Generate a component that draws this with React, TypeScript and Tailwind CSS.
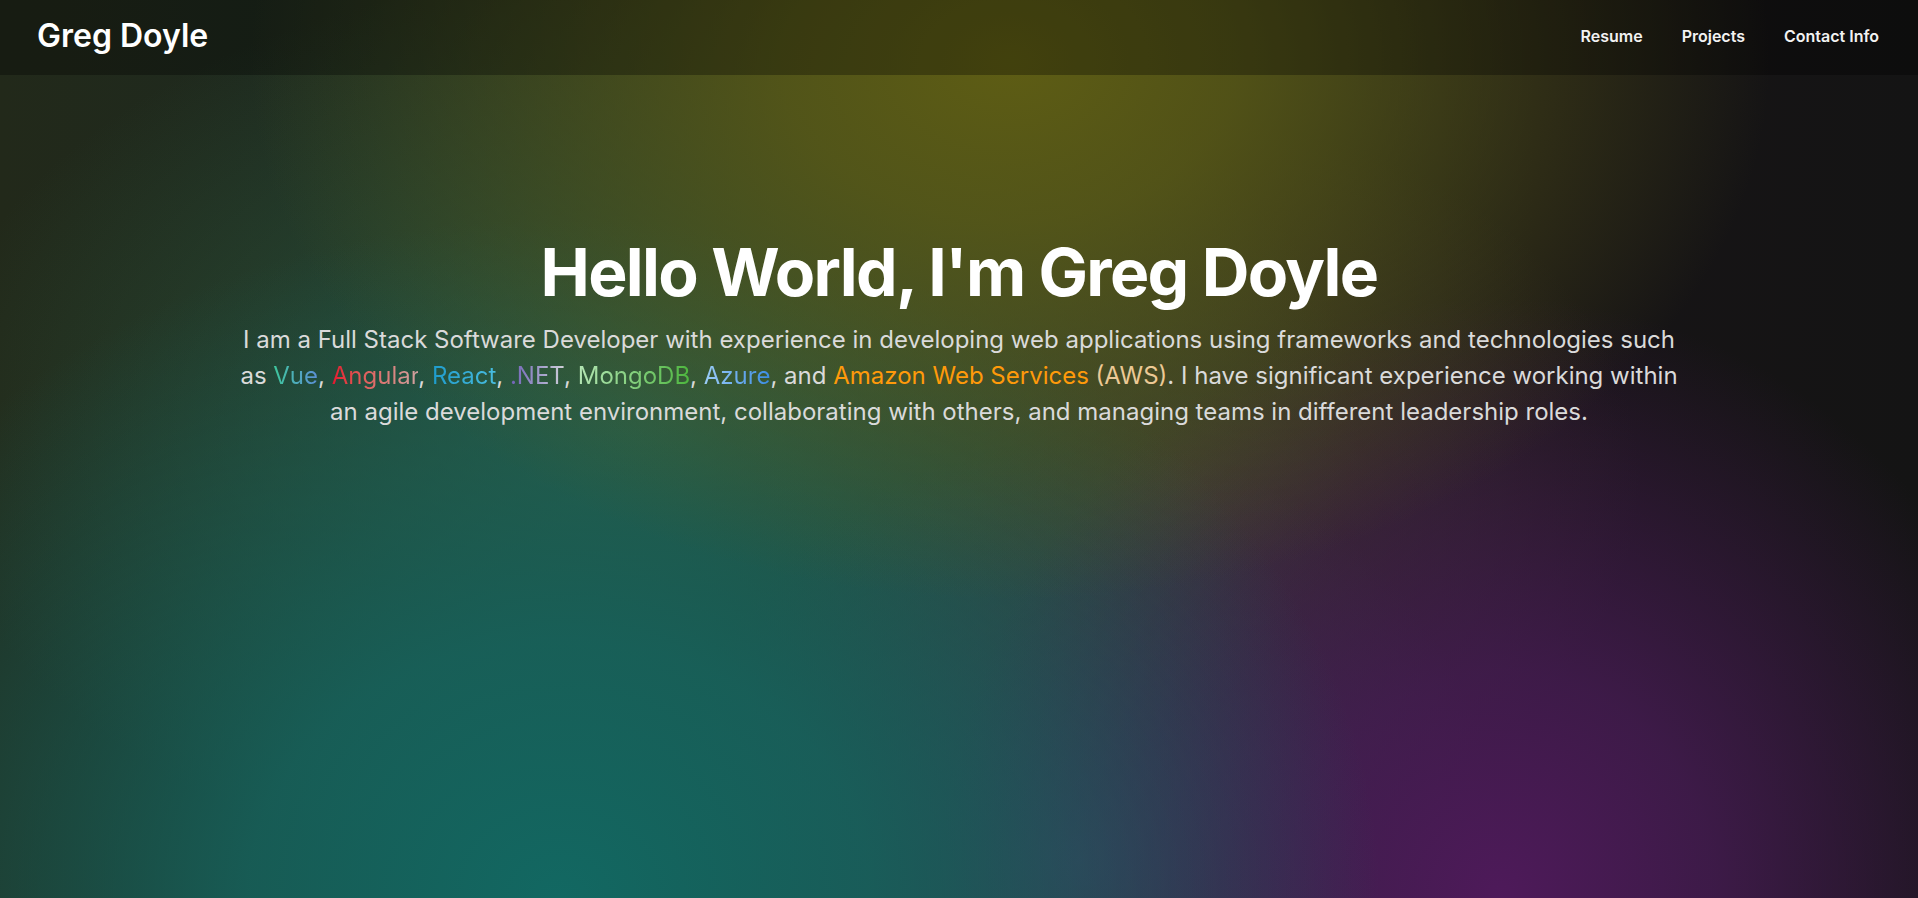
import React from 'react';

const techs = [
  { name: 'Vue', cls: 'from-[#3cc79a] to-[#5b8ed6]' },
  { name: 'Angular', cls: 'from-[#e3102e] to-[#cfa2a0]' },
  { name: 'React', cls: 'from-[#1d9bcb] to-[#48bde0]' },
  { name: '.NET', cls: 'from-[#6f5fb5] to-[#cfcfd8]' },
  { name: 'MongoDB', cls: 'from-[#b4e6b4] to-[#4cb63c]' },
  { name: 'Azure', cls: 'from-[#9ccdf7] to-[#3a8ce2]' },
];

const App: React.FC = () => {
  return (
    <div
      className="min-h-screen w-full bg-[#151515] bg-[radial-gradient(ellipse_760px_540px_at_1010px_60px,rgba(94,93,20,1)_0%,rgba(90,90,22,0.85)_30%,rgba(80,80,20,0)_100%),radial-gradient(ellipse_820px_680px_at_560px_898px,rgba(18,104,98,1)_0%,rgba(22,100,94,0.85)_38%,rgba(20,90,80,0)_100%),radial-gradient(ellipse_560px_600px_at_1500px_898px,rgba(78,26,90,1)_0%,rgba(72,28,86,0.78)_38%,rgba(60,20,60,0)_100%),radial-gradient(ellipse_420px_420px_at_1080px_860px,rgba(62,62,96,0.85)_0%,rgba(62,62,96,0)_100%),radial-gradient(ellipse_720px_460px_at_640px_430px,rgba(48,100,70,0.8)_0%,rgba(48,100,70,0)_100%),radial-gradient(ellipse_460px_360px_at_1180px_480px,rgba(82,66,52,0.55)_0%,rgba(82,66,52,0)_100%),linear-gradient(to_right,#22291a_0%,#1d2a20_20%,#1d2622_50%,#171416_80%,#141414_100%)] text-white"
      style={{ fontFamily: 'Inter, "Noto Sans", sans-serif' }}
    >
      {/* Header */}
      <header className="flex h-[75px] items-center justify-between bg-black/30 pb-1 pl-[37px] pr-[39px]">
        <h1 className="text-[32px] font-semibold text-white">Greg Doyle</h1>
        <nav className="flex gap-[39px] text-[16px] font-semibold text-[#f2f2f2]">
          <a href="#resume">Resume</a>
          <a href="#projects">Projects</a>
          <a href="#contact">Contact Info</a>
        </nav>
      </header>

      {/* Hero */}
      <section className="flex flex-col items-center px-6 pt-[160px] text-center">
        <h2 className="text-[66px] font-bold leading-[1.15] tracking-tight text-white">
          Hello World, I'm Greg Doyle
        </h2>
        <p className="mt-[11px] max-w-[1440px] text-[24px] leading-[36px] text-[#dadada]">
          I am a Full Stack Software Developer with experience in developing web applications using frameworks and
          technologies such as{' '}
          {techs.map((t) => (
            <React.Fragment key={t.name}>
              <span className={`bg-gradient-to-r bg-clip-text text-transparent ${t.cls}`}>{t.name}</span>,{' '}
            </React.Fragment>
          ))}
          and <span className="text-[#ff9a0a]">Amazon Web Services</span>{' '}
          <span className="text-[#ecc995]">(AWS)</span>. I have significant experience working within an agile
          development environment, collaborating with others, and managing teams in different leadership roles.
        </p>
      </section>
    </div>
  );
};

export default App;
